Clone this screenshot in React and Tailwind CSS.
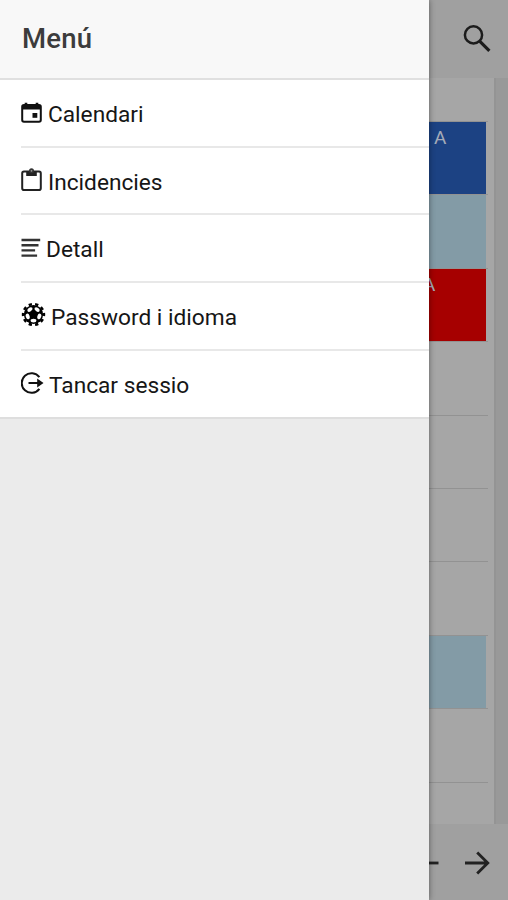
import React from "react";

const CalendarIcon = () => (
  <svg className="w-[22px] h-[22px] shrink-0" viewBox="0 0 22 22" fill="none">
    <rect x="1.2" y="3" width="18.6" height="16.8" rx="1.8" stroke="#111" strokeWidth="2" />
    <path d="M1 3h19v4.5H1z" fill="#111" />
    <path d="M5 .8v4M16 .8v4" stroke="#111" strokeWidth="2.6" />
    <rect x="11.5" y="11" width="4.8" height="4.8" fill="#111" />
  </svg>
);

const ClipboardIcon = () => (
  <svg className="w-[22px] h-[24px] mb-[2px] shrink-0" viewBox="0 0 22 24" fill="none">
    <rect x="1.2" y="3.6" width="18.6" height="18.4" rx="1.8" stroke="#222" strokeWidth="2" />
    <path d="M5.2 3h10.6v5H5.2z" fill="#222" />
    <circle cx="10.5" cy="2.8" r="1.7" fill="#999" stroke="#333" strokeWidth="1.6" />
  </svg>
);

const ListIcon = () => (
  <svg className="w-[20px] h-[20px] shrink-0" viewBox="0 0 20 20" stroke="#333" strokeWidth="2.4">
    <path d="M.5 2h18.7M.5 7.2h17M.5 12.4h13.6M.5 17.6h15.6" />
  </svg>
);

const CogIcon = () => (
  <svg className="w-[25px] h-[25px] mb-[2px] shrink-0" viewBox="0 0 25 25" fill="none">
    <circle cx="12.5" cy="12.5" r="9.6" fill="#000" />
    <circle cx="12.5" cy="12.5" r="10.4" stroke="#000" strokeWidth="2.6" pathLength="120" strokeDasharray="6 6" strokeDashoffset="3" />
    {[0, 72, 144, 216, 288].map((angle) => (
      <ellipse
        key={angle}
        cx="12.5"
        cy="18.6"
        rx="2.9"
        ry="1.9"
        fill="#fff"
        transform={`rotate(${angle} 12.5 12.5)`}
      />
    ))}
  </svg>
);

const LogoutIcon = () => (
  <svg className="w-[23px] h-[24px] mb-px shrink-0" viewBox="0 0 23 24" fill="none" stroke="#111" strokeWidth="2">
    <path d="M18.4 6.2A9.8 9.8 0 1 0 18.4 17.8" />
    <path d="M7.5 12h11" />
    <path d="M16.2 7.4l6.3 4.6-6.3 4.6z" fill="#111" stroke="none" />
  </svg>
);

const menuItems = [
  { label: "Calendari", icon: <CalendarIcon />, gap: "gap-[5px]" },
  { label: "Incidencies", icon: <ClipboardIcon />, gap: "gap-[5px]" },
  { label: "Detall", icon: <ListIcon />, gap: "gap-[5px]" },
  { label: "Password i idioma", icon: <CogIcon />, gap: "gap-[5px]" },
  { label: "Tancar sessio", icon: <LogoutIcon />, gap: "gap-[5px]" },
];

// Visible end of each calendar row behind the drawer
const rows = [
  { color: "bg-[#1c4283]", text: "A", pad: "pl-[5px]" },
  { color: "bg-[#839ba6]" },
  { color: "bg-[#a60000]", text: "A", pad: "-ml-[6px]" },
  {},
  {},
  {},
  {},
  { color: "bg-[#839ba6]" },
  {},
  {},
];

const CalendarPage = () => (
  <div className="flex flex-col h-full pl-[429px] bg-[#a0a0a0]">
    <header className="flex items-center justify-end h-[78px] pr-[17px] shrink-0">
      <svg className="w-[28px] h-[28px]" viewBox="0 0 28 28" fill="none" stroke="#1c1c1c">
        <circle cx="10.5" cy="9.9" r="8.6" strokeWidth="2.5" />
        <path d="M16.6 16.2l9.8 9.6" strokeWidth="3.2" />
      </svg>
    </header>
    <main className="flex h-[746px] bg-[#999999] overflow-hidden">
      <div className="w-[67px] pt-[43px] bg-[#a6a6a6] border-r-2 border-[#949494]">
        {rows.map((row, index) => (
          <div key={index} className="h-[73.4px] w-[59px] border-t border-[#929292]">
            {row.color && (
              <div className={`h-full w-[57px] ${row.color}`}>
                <div className={`pt-[4px] text-[19px] leading-[24px] text-[#a5abb8] ${row.pad || ""}`}>
                  {row.text}
                </div>
              </div>
            )}
          </div>
        ))}
      </div>
    </main>
    <footer className="flex items-center h-[76px] pt-[2px] shrink-0">
      <svg className="w-[10px] h-[24px]" viewBox="0 0 10 24" stroke="#222" strokeWidth="2.8">
        <path d="M0 12h9.5" />
      </svg>
      <svg className="w-[25px] h-[24px] ml-[26px]" viewBox="0 0 25 24" fill="none" stroke="#222" strokeWidth="2.8">
        <path d="M0 12h23M12.2 1.4L22.8 12 12.2 22.6" />
      </svg>
    </footer>
  </div>
);

const App = () => {
  return (
    <div className="relative w-[508px] h-[900px] overflow-hidden font-['Roboto',sans-serif]">
      <CalendarPage />
      <aside className="absolute inset-y-0 left-0 w-[429px] flex flex-col bg-[#ebebeb] shadow-[0_0_6px_rgba(0,0,0,0.45)]">
        <div className="flex items-center h-[80px] pl-[22px] bg-[#f8f8f8] border-b-2 border-[#e0e0e0] shrink-0">
          <h1 className="text-[27.5px] tracking-[0.2px] font-medium text-[#3c3c3c]">Menú</h1>
        </div>
        <ul className="bg-white border-b-2 border-[#dedede] pl-[21px]">
          {menuItems.map((item) => (
            <li
              key={item.label}
              className={`flex items-center h-[67.7px] border-b-2 border-[#e8e8e8] last:border-b-0 last:h-[65.8px] ${item.gap}`}
            >
              {item.icon}
              <span className="text-[22.7px] leading-[30px] text-[#161616] pt-[4px]">{item.label}</span>
            </li>
          ))}
        </ul>
      </aside>
    </div>
  );
};

export default App;
